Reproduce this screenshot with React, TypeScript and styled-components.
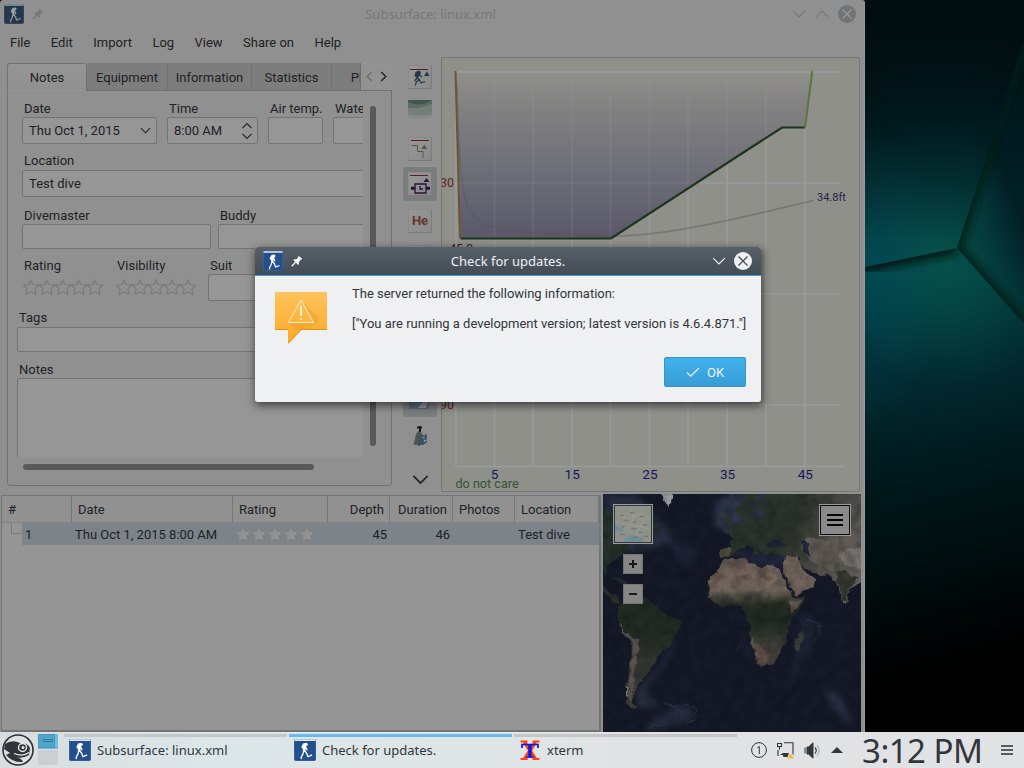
import React from "react";
import styled, { createGlobalStyle } from "styled-components";

const Global = createGlobalStyle`
  * { box-sizing: border-box; }
  body { margin: 0; background: #000; overflow: hidden; }
`;

const ui = `"Roboto", "Liberation Sans", sans-serif`;
const deco = `"Noto Sans", "Open Sans", sans-serif`;

const Desktop = styled.div`
  width: 1024px;
  height: 768px;
  position: relative;
  display: flex;
  flex-direction: column;
  background: #000;
  color: #202224;
  font: 13px/16px ${ui};
  overflow: hidden;
  white-space: nowrap;
`;
const Workspace = styled.div`
  display: flex;
  height: 732px;
  flex: none;
`;
const MainWindow = styled.main`
  width: 865px;
  flex: none;
  display: flex;
  flex-direction: column;
  background: #909090;
  border-radius: 3px 3px 0 0;
  border-right: 1px solid #989898;
`;
const TitleBar = styled.header<{ $active?: boolean }>`
  height: ${(p) => (p.$active ? 29 : 28)}px;
  flex: none;
  display: flex;
  align-items: center;
  padding: ${(p) => (p.$active ? "0 9px 0 8px" : "0 8px 0 4px")};
  color: ${(p) => (p.$active ? "#eff0f1" : "#757779")};
  background: ${(p) => (p.$active ? "linear-gradient(#566069, #434c53)" : "none")};
  border-bottom: ${(p) => (p.$active ? "1px solid #3d9fd6" : "0")};
  font: 13px/18px ${deco};
`;
const TitleSide = styled.div<{ $end?: boolean; $gap?: number }>`
  display: flex;
  align-items: center;
  gap: ${(p) => p.$gap ?? (p.$end ? 9 : 8)}px;
  width: 72px;
  justify-content: ${(p) => (p.$end ? "flex-end" : "flex-start")};
`;
const TitleText = styled.div`
  flex: 1;
  text-align: center;
  padding-left: 1px;
`;
const MenuBar = styled.nav`
  height: 29px;
  flex: none;
  display: flex;
  align-items: center;
  gap: 20.450px;
  padding: 0 0 0 10px;
`;
const TopArea = styled.section`
  display: flex;
  height: 437px;
  flex: none;
`;
const Info = styled.div`
  width: 385px;
  margin: 6px 0 0 7px;
  display: flex;
  flex-direction: column;
`;
const Tabs = styled.div`
  display: flex;
  height: 28px;
  width: 385px;
  overflow: hidden;
  margin-bottom: -1px;
  z-index: 1;
`;
const Tab = styled.div<{ $w: number; $on?: boolean }>`
  width: ${(p) => p.$w}px;
  flex: none;
  overflow: hidden;
  display: flex;
  justify-content: center;
  padding-top: 6px;
  background: ${(p) => (p.$on ? "linear-gradient(#959595,#909090)" : "#7d7d7d")};
  border: 1px solid #717171;
  border-color: ${(p) => (p.$on ? "#717171 #717171 transparent #717171" : "#7a7a7a #707070 #717171 transparent")};
  border-left-width: ${(p) => (p.$on ? 1 : 0)}px;
  border-radius: ${(p) => (p.$on ? "3px 3px 0 0" : "0")};
`;
const ClippedLabel = styled.span`
  margin-left: 25px;
`;
const TabScroll = styled.div`
  flex: 1;
  background: #929292;
  display: flex;
  align-items: center;
  justify-content: space-evenly;
  border-bottom: 1px solid #717171;
`;
const Pane = styled.div`
  height: 396px;
  border: 1px solid #717171;
  border-radius: 0 0 3px 3px;
  display: grid;
  grid-template-columns: 346px 28px;
  grid-template-rows: 357px 28px;
  padding: 9px 0 0 9px;
`;
const ScrollView = styled.div`
  overflow: hidden;
`;
const VScroll = styled.div`
  display: flex;
  padding: 6px 0 11px 7px;
`;
const HScroll = styled.div`
  padding: 7px 0 0 6px;
`;
const Thumb = styled.div<{ $w: number; $h: number }>`
  width: ${(p) => p.$w}px;
  height: ${(p) => p.$h}px;
  border-radius: 3px;
  background: #595959;
`;
const FormRow = styled.div<{ $top: number; $indent?: number; $gap?: number }>`
  display: flex;
  width: 500px;
  gap: ${(p) => p.$gap ?? 10}px;
  margin: ${(p) => p.$top}px 0 0 ${(p) => p.$indent ?? 5}px;
`;
const Field = styled.label<{ $w: number; $gap?: number }>`
  width: ${(p) => p.$w}px;
  flex: none;
  display: flex;
  flex-direction: column;
  gap: ${(p) => p.$gap ?? 1}px;
`;
const Caption = styled.span`
  padding-left: 2px;
  height: 16px;
  line-height: 18px;
`;
const Box = styled.div<{ $h: number }>`
  height: ${(p) => p.$h}px;
  border: 1px solid #747474;
  border-radius: 2px;
  background: #969696;
  display: flex;
  align-items: center;
  justify-content: space-between;
  padding: 0 5px 0 6px;
`;
const StarRow = styled.div`
  display: flex;
  height: 18px;
  margin: 4px 0 0 1px;
`;
const ToolColumn = styled.div`
  width: 34px;
  margin-left: 11px;
  padding-top: 3px;
  display: flex;
  flex-direction: column;
  align-items: center;
`;
const Tool = styled.div<{ $on?: boolean; $h?: number; $top?: number }>`
  width: 34px;
  height: ${(p) => p.$h ?? 34}px;
  margin-top: ${(p) => p.$top ?? 0}px;
  flex: none;
  border-radius: 3px;
  display: grid;
  place-items: center;
  background: ${(p) => (p.$on ? "#7a7d7d" : "transparent")};
`;
const ToolFace = styled.div`
  width: 24px;
  height: 24px;
  display: grid;
  place-items: center;
  border: 1px solid #8a8a8a;
  border-right-color: #7c7c7c;
  border-bottom-color: #787878;
  background: linear-gradient(135deg, #979797, #8a8a8a);
  color: #65352c;
  font-weight: 700;
`;
const ProfileFrame = styled.div`
  width: 419px;
  height: 435px;
  margin-left: 4px;
  border: 1px solid #747577;
  border-radius: 2px;
  background: #8f9089;
  overflow: hidden;
  & svg { display: block; }
`;
const BottomArea = styled.section`
  display: flex;
  flex: 1;
`;
const DiveList = styled.div`
  width: 600px;
  height: 237px;
  margin: 1px 0 0 1px;
  border: 1px solid #747474;
  border-width: 1px 2px 2px 1px;
  background: #959595;
`;
const HeaderRow = styled.div`
  display: flex;
  height: 27px;
  background: #919191;
  border-bottom: 1px solid #848484;
`;
const HeadCell = styled.div<{ $w: number; $right?: boolean }>`
  width: ${(p) => p.$w}px;
  padding: 6px 5px 0 6px;
  border-right: 1px solid #777;
  text-align: ${(p) => (p.$right ? "right" : "left")};
`;
const DiveRow = styled.div`
  display: flex;
  height: 22px;
`;
const Branch = styled.div`
  width: 11px;
  height: 11px;
  margin-left: 9px;
  border: solid #7a7a7a;
  border-width: 0 0 1px 1px;
`;
const Selected = styled.div`
  flex: 1;
  display: flex;
  background: #7c848a;
`;
const Cell = styled.div<{ $w: number; $right?: boolean; $pl?: number; $pr?: number; $pt?: number }>`
  width: ${(p) => p.$w}px;
  padding: ${(p) => p.$pt ?? 4}px ${(p) => p.$pr ?? 0}px 0 ${(p) => p.$pl ?? 0}px;
  text-align: ${(p) => (p.$right ? "right" : "left")};
  display: ${(p) => (p.$right ? "block" : "flex")};
`;
const MapView = styled.div`
  width: 258px;
  height: 238px;
  margin-left: 2px;
  position: relative;
  background: #151929;
  & > svg { display: block; }
`;
const MapControls = styled.div`
  position: absolute;
  inset: 10px 10px auto 10px;
  display: flex;
  justify-content: space-between;
  align-items: flex-start;
`;
const MapLeft = styled.div`
  display: flex;
  flex-direction: column;
  align-items: center;
  gap: 10px;
`;
const MapThumb = styled.div`
  width: 40px;
  height: 40px;
  border: 1px solid #999;
  & svg { display: block; border: 1px solid #33383c; }
`;
const MapButton = styled.div`
  width: 20px;
  height: 20px;
  background: #868686;
  border: 1px solid #747474;
  display: grid;
  place-items: center;
`;
const MapMenu = styled.div`
  width: 32px;
  height: 32px;
  border: 1px solid #999;
  outline: 1px solid #0c0c0c;
  outline-offset: -2px;
  background: #898989;
  display: grid;
  place-items: center;
`;
const Wallpaper = styled.div`
  width: 159px;
  height: 732px;
  & svg { display: block; }
`;
const Dialog = styled.section`
  position: absolute;
  left: 255px;
  top: 247px;
  width: 506px;
  height: 155px;
  border-radius: 3px;
  overflow: hidden;
  background: #eff0f1;
  display: flex;
  flex-direction: column;
  color: #31363b;
`;
const DialogShadow = styled.div`
  position: absolute;
  left: 255px;
  top: 247px;
  width: 506px;
  height: 155px;
  border-radius: 3px;
  box-shadow: 1px 3px 8px 1px rgba(0, 0, 0, 0.55);
`;
const DialogBody = styled.div`
  display: flex;
  padding: 16px 0 0 20px;
  gap: 25px;
`;
const Message = styled.div`
  display: flex;
  flex-direction: column;
  gap: 14px;
  margin-top: -6px;
  letter-spacing: -0.015px;
`;
const DialogFooter = styled.footer`
  display: flex;
  justify-content: flex-end;
  padding: 0 15px;
  margin-top: auto;
  margin-bottom: 15px;
`;
const OkButton = styled.button`
  width: 82px;
  height: 30px;
  border: 1px solid #3593c8;
  border-radius: 2px;
  background: linear-gradient(#40b1ee, #389dd5);
  color: #eff0f1;
  font: 13px/16px ${ui};
  display: flex;
  align-items: center;
  justify-content: center;
  gap: 7px;
  padding: 2px 0 0 0;
`;
const Taskbar = styled.footer`
  height: 36px;
  display: flex;
  background: linear-gradient(90deg, #d9dcde, #dbe6e8 20%, #dfe5e6 50%, #e1e2e4 60%, #e1e2e3);
  color: #31363b;
  font: 13px/18px ${deco};
`;
const Launcher = styled.div`
  width: 38px;
  padding: 2px 0 0 1px;
`;
const Pager = styled.div`
  width: 20px;
  display: flex;
  flex-direction: column;
  gap: 1px;
  padding-top: 2px;
  margin-right: 6px;
`;
const PagerDesk = styled.div<{ $on?: boolean }>`
  height: 15px;
  background: ${(p) => (p.$on ? "#6fbde4" : "#cdced1")};
  & i {
    display: block;
    width: 17px;
    height: 14px;
    background: #51a5cb;
    border: 1px solid #4896bb;
    padding: 4px 0 0 4px;
  }
  & b {
    display: block;
    width: 10px;
    height: 3px;
    border: 1px solid #367b9c;
  }
`;
const Task = styled.div<{ $on?: boolean }>`
  width: 223px;
  margin-right: 2px;
  border-top: 3px solid ${(p) => (p.$on ? "#68bbe9" : "#c4c6c8")};
  margin-top: 2px;
  display: flex;
  align-items: flex-start;
  padding: 2px 0 0 5px;
  gap: 6px;
  line-height: 22px;
`;
const Tray = styled.div`
  display: flex;
  align-items: center;
  gap: 10px;
  margin-left: 12px;
`;
const Clock = styled.div`
  font: 33px/36px ${deco};
  letter-spacing: -0.5px;
  margin: 1px 0 0 9px;
  width: 117px;
`;

const Diver = ({ size = 20, dim = false }: { size?: number; dim?: boolean }) => (
  <svg width={size} height={size} viewBox="0 0 20 20">
    <rect x=".5" y=".5" width="19" height="19" rx="1" fill={dim ? "#23374e" : "#234f8e"} stroke={dim ? "#374556" : "#375f94"} />
    <path d="M0.5 1h19" stroke={dim ? "#8e989c" : "#dfe9ef"} strokeWidth="1.6" />
    <g fill={dim ? "#999d9f" : "#fff"} stroke={dim ? "#999d9f" : "#fff"}>
      <circle cx="11" cy="4.9" r="1.500" stroke="none" />
      <path d="M6.600 7.500L8.200 4.200 10.500 3.600 11 6.500 8.500 9.400Z" stroke="none" />
      <path d="M10 6.500l-1 4" strokeWidth="2.600" fill="none" />
      <path d="M8.800 10.500l-.6 3-1.700 3.200M9.300 10.200l2.300 2.800.9 3M12.300 16.200l4.200-1.700M10.800 7.500l1.200 2.700M6.300 16.300l.6 2" strokeWidth="1.200" fill="none" />
    </g>
  </svg>
);

const Pin = ({ color }: { color: string }) => (
  <svg width="12" height="12" viewBox="0 0 12 12">
    <path d="M7.300.4l4.100 3.700-1.200.5-2.400 2.500.2 2.200-.9.7L2.300 5l.9-.8 2.300.1L7.500 1.800Z" fill={color} />
    <path d="M4.600 7.200L.7 11.300" stroke={color} strokeWidth="1.300" />
  </svg>
);

const Chevron = ({ dir, color = "#242424", w = 12, sw = 1.2 }: { dir: "up" | "down" | "left" | "right"; color?: string; w?: number; sw?: number }) => {
  const d = { down: "M1 3.500l5 5 5-5", up: "M1 8.500l5-5 5 5", left: "M8.500 1l-5 5 5 5", right: "M3.500 1l5 5-5 5" }[dir];
  return (
    <svg width={w} height={w} viewBox="0 0 12 12">
      <path d={d} fill="none" stroke={color} strokeWidth={sw} />
    </svg>
  );
};

const CloseDot = ({ bg, fg }: { bg: string; fg: string }) => (
  <svg width="18" height="18" viewBox="0 0 18 18">
    <circle cx="9" cy="9" r="9" fill={bg} />
    <path d="M4.500 4.500l9 9M13.500 4.500l-9 9" stroke={fg} strokeWidth="1.200" />
  </svg>
);

const Stars = ({ fill = "none", stroke = "#7a7a7a" }: { fill?: string; stroke?: string }) => (
  <svg width="80" height="18" viewBox="0 0 80 18">
    {[0, 1, 2, 3, 4].map((i) => (
      <path
        key={i}
        transform={`translate(${i * 16} 1)`}
        d="M8 1.200l2.100 4.300 5.700.5-3.800 3.900.7 5.300L8 12.800l-4.700 2.400.7-5.300L.2 6l5.700-.5Z"
        fill={fill}
        stroke={stroke}
        strokeWidth="1.200"
      />
    ))}
  </svg>
);

const Profile = () => {
  const xs = [456, 494.500, 533, 572, 610.500, 649.500, 688, 727, 766, 805];
  const shape = "M456 72L460.500 238.500H611L782 127.500H805L812 72Z";
  return (
    <svg width="417" height="433" viewBox="442 58 417 433" fontFamily='"Roboto", sans-serif'>
      <defs>
        <linearGradient id="depth" x1="0" x2="0" y1="0" y2="1">
          <stop offset="0" stopColor="#8f8f8b" />
          <stop offset=".25" stopColor="#807f80" />
          <stop offset=".65" stopColor="#6b6b76" />
          <stop offset="1" stopColor="#5a5869" />
        </linearGradient>
      </defs>
      <g stroke="#999a9b" strokeWidth="1.700">
        {xs.map((x) => <path key={x} d={`M${x} 72V467`} />)}
        {[72, 183, 294, 405, 466.500].map((y) => <path key={y} d={`M456 ${y}H${y > 460 ? 845 : 840}`} />)}
      </g>
      <path d={shape} fill="url(#depth)" />
      <g stroke="#9999a8" strokeWidth="1.600" opacity=".2">
        {xs.slice(1, 9).map((x) => <path key={x} d={`M${x} 72V${x < 611 ? 238 : 238 - (x - 611) * 0.649}`} />)}
        <path d="M458 183H696" />
      </g>
      <path d="M456 72H812" stroke="#999a9b" strokeWidth="1.500" />
      <path d="M456.500 82C459 150 460 186 467 204S488 227 505 230S585 236 623 236C680 233 740 218 813 200.500" fill="none" stroke="#565658" strokeOpacity=".45" strokeWidth="1.600" />
      <g fill="none" strokeWidth="2">
        <path d="M460.500 238.500H611L782 127.500H805" stroke="#1b361c" strokeWidth="2.200" />
        <path d="M455.500 71L460 238" stroke="#705330" />
        <path d="M805 128L812.300 71" stroke="#5a7838" />
      </g>
      <g fill="#681f23" fontSize="12.500" textAnchor="end">
        <text x="454" y="187">30</text>
        <text x="454" y="298">60</text>
        <text x="454" y="409">90</text>
      </g>
      <text x="449.500" y="253" fontSize="12" fill="#391722">45.0</text>
      <g fill="#16165f" fontSize="13.500" textAnchor="middle">
        {[5, 15, 25, 35, 45].map((n, i) => <text key={n} x={494.500 + i * 77.700} y="479">{n}</text>)}
      </g>
      <text x="817" y="201" fontSize="11" fill="#28234a">34.8ft</text>
      <text x="455.500" y="488" fontSize="12.600" fill="#32533a">do not care</text>
    </svg>
  );
};

const WorldMap = () => (
  <svg width="258" height="238" viewBox="9 12 774 714" preserveAspectRatio="none">
    <defs>
      <filter id="coast" x="-5%" y="-5%" width="110%" height="110%" colorInterpolationFilters="sRGB">
        <feTurbulence type="fractalNoise" baseFrequency=".045" numOctaves="3" seed="4" />
        <feDisplacementMap in="SourceGraphic" scale="18" xChannelSelector="R" yChannelSelector="G" />
        <feGaussianBlur stdDeviation="2" />
      </filter>
      <filter id="soft" colorInterpolationFilters="sRGB"><feGaussianBlur stdDeviation="10" /></filter>
      <filter id="grain" colorInterpolationFilters="sRGB">
        <feTurbulence type="fractalNoise" baseFrequency=".03" numOctaves="4" seed="9" />
        <feColorMatrix values="0 0 0 0 .04  0 0 0 0 .05  0 0 0 0 .07  1.500 0 0 0 -.5" />
      </filter>
      <linearGradient id="africa" x1="0" x2="0" y1="200" y2="535" gradientUnits="userSpaceOnUse">
        <stop offset="0" stopColor="#695b52" />
        <stop offset=".3" stopColor="#73665d" />
        <stop offset=".37" stopColor="#45453a" />
        <stop offset=".43" stopColor="#262e24" />
        <stop offset=".56" stopColor="#1f281f" />
        <stop offset=".72" stopColor="#333930" />
        <stop offset=".85" stopColor="#4c453e" />
        <stop offset="1" stopColor="#494641" />
      </linearGradient>
      <linearGradient id="eurasia" x1="360" x2="783" y1="20" y2="230" gradientUnits="userSpaceOnUse">
        <stop offset="0" stopColor="#28342c" />
        <stop offset=".5" stopColor="#2c342b" />
        <stop offset=".7" stopColor="#4a4942" />
        <stop offset="1" stopColor="#65605a" />
      </linearGradient>
      <linearGradient id="samerica" x1="0" x2="0" y1="320" y2="655" gradientUnits="userSpaceOnUse">
        <stop offset="0" stopColor="#222b23" />
        <stop offset=".35" stopColor="#242c24" />
        <stop offset=".65" stopColor="#353a32" />
        <stop offset="1" stopColor="#48463f" />
      </linearGradient>
    </defs>
    <rect x="9" y="12" width="774" height="714" fill="#151928" />
    <g filter="url(#soft)" fill="#2b3144">
      <path d="M9 12H110L215 130 200 165 90 190 40 190 9 230Z" fill="#292f42" />
      <path d="M345 30L420 12H500L480 60 390 120 345 110Z" fill="#30364c" />
      <path d="M370 180H620V235H470Z" fill="#20273a" />
      <path d="M240 410L200 500 140 570 115 590 110 650 180 650 135 600 165 560 210 500Z" />
      <path d="M670 590L720 620 760 700 730 690 690 640Z" />
      <path d="M230 650Q310 650 270 690L130 725 150 700Z" />
      <path d="M200 130L290 180 270 240 220 200ZM420 420L480 535 430 480Z" opacity=".45" />
      <path d="M600 370L660 400 650 450 600 530 560 600 590 480Z" opacity=".45" />
    </g>
    <g filter="url(#coast)">
      <path d="M9 60L60 50 165 90 170 120 150 155 95 165 65 195 25 225 18 255 8 240Z" fill="#27302a" />
      <path d="M9 280L30 310 45 312 60 340 50 345 9 300Z" fill="#2b332a" />
      <path d="M35 265L75 270 90 285 60 278ZM95 283L125 290 110 296Z" fill="#2b3230" />
      <path d="M178 2H222L216 38 205 48 190 30Z" fill="#9a9e9f" />
      <path d="M60 345L78 332 110 318 135 324 170 350 192 370 215 378 245 397 240 418 222 442 216 468 190 480 175 505 155 530 142 552 125 575 110 590 105 615 95 638 112 654 95 656 80 640 78 600 84 550 92 500 95 455 75 430 55 400 50 380Z" fill="url(#samerica)" />
      <path d="M52 385L75 428 100 445 118 450 112 490 104 560 95 630 87 635 86 590 94 520 98 460 68 428Z" fill="#5a544f" />
      <path d="M81 590V622" stroke="#a4a19d" strokeWidth="4" />
      <path d="M398 0H800V265L748 300 742 335 730 340 710 275 690 260 642 250 600 225 600 200 560 205 545 198 522 190 500 196 480 186 470 168 482 200 464 195 450 168 420 172 396 198 362 204 362 176 396 170 392 135 368 122 400 108 428 90 436 72 426 80 405 66 440 12Z" fill="url(#eurasia)" />
      <path d="M362 175H395L388 198 362 205Z" fill="#4f4a3e" />
      <path d="M385 0H430L405 66 400 100 380 60Z" fill="#2d3449" />
      <path d="M490 0L496 18 478 30 470 70 500 62 500 72 463 84 440 90 452 86 466 58 470 26 482 0Z" fill="#293247" />
      <path d="M370 62L384 72 392 100 372 106 378 86ZM355 86L368 88 364 102 352 102Z" fill="#303931" />
      <path d="M620 145L680 150 730 110 800 130V260L720 250 650 225 612 190 600 165Z" fill="#605b54" />
      <path d="M720 190Q750 165 800 180V240L735 225Z" fill="#77736d" />
      <path d="M705 245L735 240 760 260 775 265 745 300 738 336 728 330Z" fill="#36392e" />
      <path d="M603 145L618 150 624 178 633 198 614 192 605 168Z" fill="#20273c" />
      <path d="M502 158L535 148 565 164 540 172 508 172Z" fill="#20273c" />
      <path d="M400 205L375 210 345 245 325 270 327 325 350 343 380 352 425 345 437 365 440 390 452 410 448 440 460 480 470 515 480 530 510 525 535 500 545 475 560 450 562 415 580 385 605 350 615 322 580 322 568 300 540 240 530 228 500 225 480 230 465 222 440 218 440 205Z" fill="url(#africa)" />
      <path d="M545 220L560 202 592 200 606 235 620 250 652 270 640 290 600 312 583 315 565 280 550 250Z" fill="#73655c" />
      <path d="M540 228L552 252 568 285 584 317" fill="none" stroke="#1d2336" strokeWidth="7" />
      <path d="M608 418L608 450 595 485 583 480 585 450Z" fill="#3c3f35" />
      <path d="M450 440L478 470 500 480 505 510 480 525 462 485Z" fill="#5f5147" />
      <path d="M565 332L608 330 592 352 570 366Z" fill="#5c534b" />
      <path d="M380 260L430 240 470 258 530 250 540 290 480 300 420 285Z" fill="#7c6b60" opacity=".6" />
      <path d="M420 262l30-12 8 14-20 10ZM470 245l28 6 18 18-20 2ZM380 235l20-15 20 8Z" fill="#64564d" />
      <path d="M145 712L195 700M190 640L245 655M250 640Q292 650 288 680L262 700" fill="none" stroke="#2f3544" strokeWidth="4" />
      <path d="M622 388L650 400 660 425 642 455M410 490L420 460" fill="none" stroke="#2b3144" strokeWidth="4" />
    </g>
    <rect x="9" y="12" width="774" height="714" filter="url(#grain)" opacity=".4" />
  </svg>
);

const Wall = () => (
  <svg width="159" height="732" viewBox="865 0 159 732">
    <defs>
      <radialGradient id="glowA" gradientUnits="userSpaceOnUse" cx="940" cy="258" r="235">
        <stop offset="0" stopColor="#065149" />
        <stop offset=".25" stopColor="#043f40" />
        <stop offset=".6" stopColor="#02252a" />
        <stop offset="1" stopColor="#001115" />
      </radialGradient>
      <radialGradient id="glowB" gradientUnits="userSpaceOnUse" cx="945" cy="258" r="235">
        <stop offset="0" stopColor="#05514b" />
        <stop offset=".2" stopColor="#044644" />
        <stop offset=".55" stopColor="#02282e" />
        <stop offset="1" stopColor="#002226" />
      </radialGradient>
      <linearGradient id="side" x1="957" x2="1024" y1="250" y2="225" gradientUnits="userSpaceOnUse">
        <stop offset="0" stopColor="#064c46" />
        <stop offset=".5" stopColor="#04383a" />
        <stop offset="1" stopColor="#011f25" />
      </linearGradient>
      <radialGradient id="left" cx="868" cy="275" r="150" gradientUnits="userSpaceOnUse" gradientTransform="translate(434 0) scale(.5 1)">
        <stop offset="0" stopColor="#035468" stopOpacity=".5" />
        <stop offset="1" stopColor="#035468" stopOpacity="0" />
      </radialGradient>
      <linearGradient id="fade" x1="875" x2="955" y1="400" y2="700" gradientUnits="userSpaceOnUse">
        <stop offset="0" stopColor="#000" stopOpacity="0" />
        <stop offset=".9" stopColor="#000" />
      </linearGradient>
      <linearGradient id="topfade" x1="0" x2="0" y1="0" y2="240" gradientUnits="userSpaceOnUse">
        <stop offset="0" stopColor="#000d10" />
        <stop offset="1" stopColor="#000d10" stopOpacity="0" />
      </linearGradient>
      <linearGradient id="sidefade" x1="0" x2="0" y1="30" y2="190" gradientUnits="userSpaceOnUse">
        <stop offset="0" stopColor="#001215" />
        <stop offset="1" stopColor="#001215" stopOpacity="0" />
      </linearGradient>
      <filter id="edge" x="-20%" y="-20%" width="140%" height="140%"><feGaussianBlur stdDeviation="4" /></filter>
      <clipPath id="cr"><path d="M1024 40L957 248 1024 324Z" /></clipPath>
      <clipPath id="cb"><path d="M865 267L957 248 1024 324V732H865Z" /></clipPath>
    </defs>
    <rect x="865" width="159" height="732" fill="url(#glowA)" />
    <rect x="865" y="100" width="159" height="180" fill="url(#left)" />
    <rect x="865" width="159" height="240" fill="url(#topfade)" />
    <g clipPath="url(#cr)">
      <rect x="950" y="30" width="80" height="300" fill="url(#side)" />
      <rect x="950" y="30" width="80" height="180" fill="url(#sidefade)" />
      <path d="M1024 40L957 248L1030 330" fill="none" stroke="#001a18" strokeWidth="10" filter="url(#edge)" />
    </g>
    <g clipPath="url(#cb)">
      <rect x="865" y="240" width="159" height="492" fill="url(#glowB)" />
      <rect x="865" y="240" width="159" height="200" fill="url(#left)" />
      <rect x="865" y="240" width="159" height="492" fill="url(#fade)" />
      <path d="M860 268L957 248" stroke="#00120f" strokeWidth="10" filter="url(#edge)" />
    </g>
  </svg>
);

const ThumbMap = () => (
  <svg width="38" height="38" viewBox="0 0 38 38">
    <rect width="38" height="38" fill="#8d918a" />
    <path d="M0 21Q7 21 9 27L3 27 0 26ZM10 35L18 30 30 34 29 38H10Z" fill="#6f8c99" />
    <path d="M2 8L12 14 24 9 37 14M1 17L16 20 36 24M16 1L20 12 14 24 25 35M28 1L30 17 22 30" stroke="#a49e87" fill="none" strokeWidth=".8" />
    <path d="M5 10h4M16 7h4M26 11h5M10 15h4M19 17h3M29 20h5M7 22h3M17 24h5M5 30h5M25 28h4M20 33h4M31 32h4" stroke="#62625d" strokeWidth=".8" />
  </svg>
);

export default function App() {
  return (
    <Desktop>
      <Global />
      <Workspace>
        <MainWindow>
          <TitleBar>
            <TitleSide><Diver dim /><Pin color="#757779" /></TitleSide>
            <TitleText>Subsurface: linux.xml</TitleText>
            <TitleSide $end>
              <Chevron dir="down" color="#757779" w={14} sw={1} />
              <Chevron dir="up" color="#757779" w={14} sw={1} />
              <CloseDot bg="#717375" fg="#999" />
            </TitleSide>
          </TitleBar>
          <MenuBar>
            {["File", "Edit", "Import", "Log", "View", "Share on", "Help"].map((m) => <span key={m}>{m}</span>)}
          </MenuBar>
          <TopArea>
            <Info>
              <Tabs>
                <Tab $w={80} $on>Notes</Tab>
                <Tab $w={81}>Equipment</Tab>
                <Tab $w={84}>Information</Tab>
                <Tab $w={80}>Statistics</Tab>
                <Tab $w={29}><ClippedLabel>Ph</ClippedLabel></Tab>
                <TabScroll>
                  <Chevron dir="left" color="#676767" w={11} />
                  <Chevron dir="right" w={11} sw={1.5} />
                </TabScroll>
              </Tabs>
              <Pane>
                <ScrollView>
                  <FormRow $top={0}>
                    <Field $w={135}>
                      <Caption>Date</Caption>
                      <Box $h={27}>Thu Oct 1, 2015<Chevron dir="down" w={11} /></Box>
                    </Field>
                    <Field $w={91}>
                      <Caption>Time</Caption>
                      <Box $h={27}>
                        8:00 AM
                        <svg width="10" height="18" viewBox="0 0 10 18">
                          <path d="M.5 6L5 1.500 9.500 6M.5 12L5 16.500 9.500 12" fill="none" stroke="#292929" strokeWidth="1.100" />
                        </svg>
                      </Box>
                    </Field>
                    <Field $w={55}><Caption>Air temp.</Caption><Box $h={27} /></Field>
                    <Field $w={70}><Caption>Water temp.</Caption><Box $h={27} /></Field>
                  </FormRow>
                  <FormRow $top={8}>
                    <Field $w={400} $gap={2}><Caption>Location</Caption><Box $h={27}>Test dive</Box></Field>
                  </FormRow>
                  <FormRow $top={10} $gap={7}>
                    <Field $w={189}><Caption>Divemaster</Caption><Box $h={25} /></Field>
                    <Field $w={189}><Caption>Buddy</Caption><Box $h={25} /></Field>
                  </FormRow>
                  <FormRow $top={8}>
                    <Field $w={83}><Caption>Rating</Caption><StarRow><Stars /></StarRow></Field>
                    <Field $w={83}><Caption>Visibility</Caption><StarRow><Stars /></StarRow></Field>
                    <Field $w={189}><Caption>Suit</Caption><Box $h={27} /></Field>
                  </FormRow>
                  <FormRow $top={8} $indent={0}>
                    <Field $w={400} $gap={2}><Caption>Tags</Caption><Box $h={25} /></Field>
                  </FormRow>
                  <FormRow $top={9} $indent={0}>
                    <Field $w={400}><Caption>Notes</Caption><Box $h={120} /></Field>
                  </FormRow>
                </ScrollView>
                <VScroll><Thumb $w={6} $h={340} /></VScroll>
                <HScroll><Thumb $w={291} $h={6} /></HScroll>
              </Pane>
            </Info>
            <ToolColumn>
              <Tool>
                <ToolFace>
                  <svg width="22" height="22" viewBox="0 0 22 22">
                    <path d="M1 3.500h18" stroke="#571d20" />
                    <path d="M6.500 6l3.500-1.500 2 1.500-1 3.500-3 2.500-2.500-2Z" fill="#273746" />
                    <path d="M8 11l2 2.500-3 3-.5 3M8 12l-2.500 3M10 13l2 4 4-1.500M9 8l4 3" stroke="#273746" strokeWidth="1.300" fill="none" />
                    <path d="M15 10l2.800-4.500 2.800 4.500Z" fill="#273746" />
                  </svg>
                </ToolFace>
              </Tool>
              <Tool $h={29}>
                <svg width="24" height="18" viewBox="0 0 24 18">
                  <rect width="24" height="18" fill="#757f7a" />
                  <path d="M0 0H24V4Q13 9 0 8Z" fill="#5b6d64" />
                  <path d="M0 0H24Q13 8 0 2Z" fill="#42564d" />
                  <path d="M0 14Q13 17 24 14V18H0Z" fill="#858a88" />
                </svg>
              </Tool>
              <Tool $h={51}>
                <ToolFace>
                  <svg width="22" height="22" viewBox="0 0 22 22">
                    <path d="M2 2.500h18" stroke="#571d20" />
                    <path d="M2.500 7.500h6v6h5.500v6.500" stroke="#56563f" fill="none" />
                    <path d="M12.500 11l2.800-4.500 2.800 4.500Z" fill="#56563f" />
                  </svg>
                </ToolFace>
              </Tool>
              <Tool $on $top={-7}>
                <ToolFace>
                  <svg width="22" height="22" viewBox="0 0 22 22">
                    <path d="M1 2.500h18" stroke="#571d20" />
                    <path d="M6 11h11v9H6ZM2 14.500h4M2 16h4M17 14.500h4M17 16h4M11 13v3h3" stroke="#281038" strokeWidth="1.300" fill="none" />
                    <path d="M14.500 9l3-4 3 4Z" fill="#281038" />
                  </svg>
                </ToolFace>
              </Tool>
              <Tool $h={39}><ToolFace>He</ToolFace></Tool>
              <Tool><ToolFace /></Tool>
              <Tool $on $top={109}>
                <svg width="22" height="24" viewBox="0 0 22 24">
                  <rect width="20" height="21" fill="#586b7c" />
                  <path d="M9 20L22 3 17 20Z" fill="#979797" />
                </svg>
              </Tool>
              <Tool $h={38}>
                <svg width="16" height="22" viewBox="0 0 16 22">
                  <path d="M1.500 20L4 9 6.500 6 10 8 12 20Z" fill="#505354" />
                  <path d="M8 1v6M5 2.500h5" stroke="#161819" strokeWidth="2" />
                  <path d="M6 13Q11 8 14 13M14 9v5H9M15 16Q10 21 7 17M7 21v-5h5" stroke="#364e6a" strokeWidth="1.600" fill="none" />
                </svg>
              </Tool>
              <Tool $h={48}><Chevron dir="down" w={17} sw={1.3} /></Tool>
            </ToolColumn>
            <ProfileFrame><Profile /></ProfileFrame>
          </TopArea>
          <BottomArea>
            <DiveList>
              <HeaderRow>
                <HeadCell $w={70}>#</HeadCell>
                <HeadCell $w={161}>Date</HeadCell>
                <HeadCell $w={95}>Rating</HeadCell>
                <HeadCell $w={62} $right>Depth</HeadCell>
                <HeadCell $w={63} $right>Duration</HeadCell>
                <HeadCell $w={62}>Photos</HeadCell>
                <HeadCell $w={84}>Location</HeadCell>
              </HeaderRow>
              <DiveRow>
                <Branch />
                <Selected>
                  <Cell $w={50} $pl={3}>1</Cell>
                  <Cell $w={161} $pl={3}>Thu Oct 1, 2015 8:00 AM</Cell>
                  <Cell $w={95} $pl={2} $pt={2}><Stars fill="#929292" stroke="#808385" /></Cell>
                  <Cell $w={62} $pr={3} $right>45</Cell>
                  <Cell $w={63} $pr={3} $right>46</Cell>
                  <Cell $w={62} />
                  <Cell $w={84} $pl={3}>Test dive</Cell>
                </Selected>
              </DiveRow>
            </DiveList>
            <MapView>
              <WorldMap />
              <MapControls>
                <MapLeft>
                  <MapThumb><ThumbMap /></MapThumb>
                  <MapButton>
                    <svg width="10" height="10"><path d="M1 5h8M5 1v8" stroke="#151719" strokeWidth="2" /></svg>
                  </MapButton>
                  <MapButton>
                    <svg width="10" height="10"><path d="M1 5h8" stroke="#151719" strokeWidth="2" /></svg>
                  </MapButton>
                </MapLeft>
                <MapMenu>
                  <svg width="16" height="12"><path d="M0 1h16M0 6h16M0 11h16" stroke="#060606" strokeWidth="2" /></svg>
                </MapMenu>
              </MapControls>
            </MapView>
          </BottomArea>
        </MainWindow>
        <Wallpaper><Wall /></Wallpaper>
      </Workspace>

      <DialogShadow />
      <Dialog role="dialog">
        <TitleBar $active>
          <TitleSide><Diver size={20} /><Pin color="#f4f5f5" /></TitleSide>
          <TitleText>Check for updates.</TitleText>
          <TitleSide $end $gap={8}>
            <Chevron dir="down" color="#eff0f1" w={14} sw={1} />
            <CloseDot bg="#eff0f1" fg="#434c53" />
          </TitleSide>
        </TitleBar>
        <DialogBody>
          <svg width="52" height="52" viewBox="0 0 52 52">
            <defs>
              <linearGradient id="warn" x1="0" x2="0" y1="0" y2="1">
                <stop offset="0" stopColor="#ffc35c" />
                <stop offset="1" stopColor="#fba824" />
              </linearGradient>
            </defs>
            <path d="M0 0H52V38H26L13 52V38H0Z" fill="url(#warn)" />
            <path d="M26 8L45 27 33 38H21L13 31H38Z" fill="#df941f" opacity=".3" />
            <path d="M0 37.500H13M26 37.500H52M26.500 37.500L13.500 51" stroke="#e38f12" />
            <path d="M26 8L13.500 30.500H38.500Z" fill="none" stroke="#fff1d5" strokeWidth="1" />
            <path d="M26 14V24M26 26V28" stroke="#fff" strokeWidth="1.600" />
          </svg>
          <Message>
            <span>The server returned the following information:</span>
            <span>["You are running a development version; latest version is 4.6.4.871."]</span>
          </Message>
        </DialogBody>
        <DialogFooter>
          <OkButton>
            <svg width="14" height="12" viewBox="0 0 14 12"><path d="M1 5.500l3.700 3.700L13 1" fill="none" stroke="#eff0f1" strokeWidth="1.200" /></svg>
            OK
          </OkButton>
        </DialogFooter>
      </Dialog>

      <Taskbar>
        <Launcher>
          <svg width="34" height="34" viewBox="0 0 34 34">
            <circle cx="17" cy="16" r="15" fill="#dee1e2" stroke="#2b3034" strokeWidth="1.600" />
            <path d="M4 10Q11 5 19 9Q27 9 29 14L28 21Q22 25 14 23Q21 24 22 28Q12 29 5 21L9 19 3 15Z" fill="#2f3539" />
            <circle cx="21.500" cy="13.500" r="4" fill="#2f3539" stroke="#e4e7e8" strokeWidth="1.400" />
            <circle cx="22" cy="13.500" r="1.500" fill="#e4e7e8" />
            <path d="M13 19.500Q22 23 28 18.500" stroke="#e4e7e8" strokeWidth="1.300" fill="none" />
          </svg>
        </Launcher>
        <Pager>
          <PagerDesk $on><i><b /></i></PagerDesk>
          <PagerDesk />
        </Pager>
        <Task><Diver size={22} />Subsurface: linux.xml</Task>
        <Task $on><Diver size={22} />Check for updates.</Task>
        <Task>
          <svg width="22" height="22" viewBox="0 0 22 22">
            <path d="M1.500 2.500h7M13.500 2.500h7M1.500 20h7M13.500 20h7" stroke="#fb4311" strokeWidth="2" />
            <path d="M5.500 3L16.500 20M16.500 3L5.500 20" stroke="#fb4311" strokeWidth="3.400" />
            <path d="M3 9V5.500H19V9M7.500 18H14.500" stroke="#0d14e6" strokeWidth="1.700" fill="none" />
            <path d="M11 5V18.500" stroke="#0d14e6" strokeWidth="3.400" />
          </svg>
          xterm
        </Task>
        <Tray>
          <svg width="16" height="16" viewBox="0 0 16 16">
            <circle cx="8" cy="8" r="7.400" fill="none" stroke="#31363b" />
            <path d="M6.300 5.800L8.300 4.500V12" fill="none" stroke="#31363b" />
          </svg>
          <svg width="17" height="17" viewBox="0 0 17 17">
            <path d="M.5 1.500h4v3h-4ZM7 .8h9v11.700M2.500 4.500v3M1 8v6M3.500 12.500H8" fill="none" stroke="#31363b" strokeWidth="1.100" />
            <path d="M5 11h7l-1.500 4H6.500Z" fill="#31363b" />
            <path d="M10 16.500l3.500-5 3.500 5Z" fill="#f7b84a" />
          </svg>
          <svg width="17" height="17" viewBox="0 0 17 17">
            <path d="M1 5.500v6M3 5H4.500L9 .8V16.200L4.500 12H3Z" fill="#31363b" stroke="#31363b" />
            <path d="M11 5.500Q13.500 8.500 11 11.500" fill="none" stroke="#31363b" strokeWidth="1.200" />
            <path d="M13 3Q17.500 8.500 13 14" fill="none" stroke="#aeb1b3" strokeWidth="1.200" />
          </svg>
          <svg width="12" height="8" viewBox="0 0 12 8"><path d="M0 7L6 1 12 7Z" fill="#31363b" /></svg>
          <Clock>3:12 PM</Clock>
          <svg width="24" height="10" viewBox="-12 0 24 10"><path d="M0 1h12M0 5h12M0 9h12" stroke="#2b3034" strokeWidth="1.600" /></svg>
        </Tray>
      </Taskbar>
    </Desktop>
  );
}
